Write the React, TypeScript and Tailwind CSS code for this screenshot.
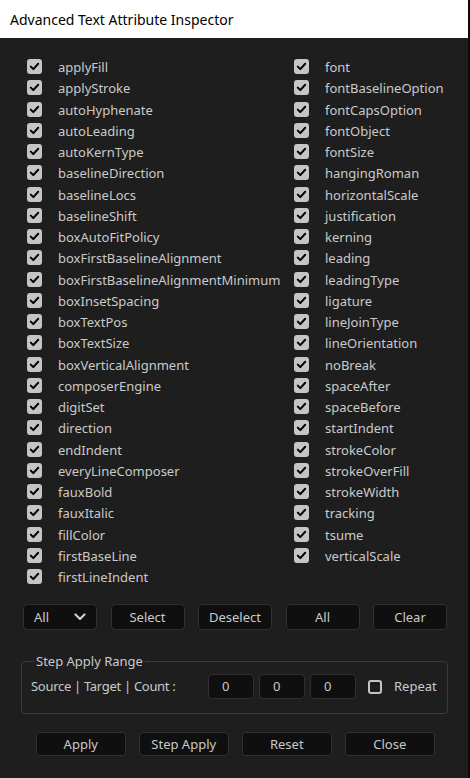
import React from "react";

const left = [
  "applyFill","applyStroke","autoHyphenate","autoLeading","autoKernType","baselineDirection","baselineLocs","baselineShift","boxAutoFitPolicy","boxFirstBaselineAlignment","boxFirstBaselineAlignmentMinimum","boxInsetSpacing","boxTextPos","boxTextSize","boxVerticalAlignment","composerEngine","digitSet","direction","endIndent","everyLineComposer","fauxBold","fauxItalic","fillColor","firstBaseLine","firstLineIndent",
];
const right = [
  "font","fontBaselineOption","fontCapsOption","fontObject","fontSize","hangingRoman","horizontalScale","justification","kerning","leading","leadingType","ligature","lineJoinType","lineOrientation","noBreak","spaceAfter","spaceBefore","startIndent","strokeColor","strokeOverFill","strokeWidth","tracking","tsume","verticalScale",
];

function Check() {
  return (
    <div className="w-[15px] h-[15px] rounded-[3px] bg-[#c5c5c5] flex items-center justify-center shrink-0">
      <svg width="11" height="11" viewBox="0 0 11 11">
        <path d="M1.8 5.6 L4.3 8.1 L9.2 2.8" fill="none" stroke="#000" strokeWidth="2" strokeLinecap="round" strokeLinejoin="round" />
      </svg>
    </div>
  );
}

function Item({ label }: { label: string }) {
  return (
    <div className="h-[21.25px] flex items-center">
      <Check />
      <span className="ml-[16px] text-[13px] text-[#cacaca] whitespace-nowrap leading-none pt-[2px]">{label}</span>
    </div>
  );
}

function Btn({ children, w }: { children: React.ReactNode; w: string }) {
  return (
    <div className={`${w} flex items-center justify-center rounded-[4px] bg-[#0f0f0f] border border-[#303030] text-[13px] text-[#cacaca]`}>
      {children}
    </div>
  );
}

export default function App() {
  return (
    <div
      className="w-[470px] h-[778px] bg-[#1e1e1e] flex flex-col relative overflow-hidden"
      style={{ fontFamily: '"Noto Sans", "Open Sans", sans-serif' }}
    >
      <div className="h-[38px] w-[468px] bg-white flex items-center pl-[10px] text-[14px] text-black shrink-0">
        Advanced Text Attribute Inspector
      </div>
      <div className="absolute right-0 top-0 w-[2px] h-full bg-[#0a0a0a]" />

      <div className="grid grid-cols-[267px_1fr] pl-[27px] pt-[18px]">
        <div className="flex flex-col">
          {left.map((l) => (
            <Item key={l} label={l} />
          ))}
        </div>
        <div className="flex flex-col">
          {right.map((l) => (
            <Item key={l} label={l} />
          ))}
        </div>
      </div>

      <div className="flex h-[26px] mt-[17px] pl-[23px] gap-[13.5px]">
        <div className="w-[74px] flex items-center justify-between rounded-[4px] bg-[#0f0f0f] border border-[#303030] text-[13px] text-[#cacaca] pl-[10px] pr-[10px]">
          <span>All</span>
          <svg width="12" height="8" viewBox="0 0 12 8">
            <path d="M1.5 1.5 L6 6 L10.5 1.5" fill="none" stroke="#cacaca" strokeWidth="2.2" strokeLinecap="round" strokeLinejoin="round" />
          </svg>
        </div>
        <Btn w="w-[74px]">Select</Btn>
        <Btn w="w-[74px]">Deselect</Btn>
        <Btn w="w-[74px]">All</Btn>
        <Btn w="w-[74px]">Clear</Btn>
      </div>

      <fieldset className="ml-[21px] w-[427px] mt-[22px] h-[62px] border border-[#3a3a3a] rounded-[4px] px-[9px]">
        <legend className="ml-[3px] px-[2px] text-[13px] text-[#cacaca] leading-[18px]">Step Apply Range</legend>
        <div className="flex items-center mt-[4px]">
          <span className="text-[13px] text-[#cacaca] w-[177px] whitespace-nowrap tracking-[-0.3px]">Source | Target | Count :</span>
          <div className="flex gap-[5px]">
            {[0, 1, 2].map((i) => (
              <div key={i} className="w-[46px] h-[25px] rounded-[4px] bg-[#0f0f0f] border border-[#303030] text-[13px] text-[#cacaca] flex items-center pl-[13px]">
                0
              </div>
            ))}
          </div>
          <div className="ml-[12px] w-[14px] h-[14px] rounded-[3px] border-2 border-[#c5c5c5]" />
          <span className="ml-[12px] text-[13px] text-[#cacaca]">Repeat</span>
        </div>
      </fieldset>

      <div className="flex h-[24px] mt-[18px] pl-[36px] gap-[13.5px]">
        <Btn w="w-[89.5px]">Apply</Btn>
        <Btn w="w-[89.5px]">Step Apply</Btn>
        <Btn w="w-[89.5px]">Reset</Btn>
        <Btn w="w-[89.5px]">Close</Btn>
      </div>
    </div>
  );
}
